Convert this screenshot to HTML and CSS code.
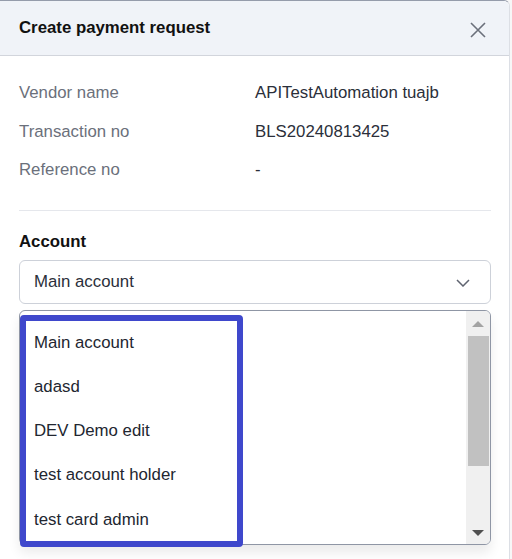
FILE: index.html
```html
<!DOCTYPE html>
<html lang="en">
<head>
  <meta charset="UTF-8">
  <meta name="viewport" content="width=device-width, initial-scale=1.0">
  <title>Create payment request</title>
  <link rel="stylesheet" href="styles.css">
</head>
<body>
  <div class="panel">
    <header class="panel-header">
      <h1>Create payment request</h1>
      <button class="close-btn" aria-label="Close">
        <svg width="16" height="16" viewBox="0 0 16 16">
          <path d="M1 1 L15 15 M15 1 L1 15" stroke="#6b707b" stroke-width="1.6" fill="none"/>
        </svg>
      </button>
    </header>

    <div class="panel-body">
      <dl class="details">
        <div class="detail-row">
          <dt>Vendor name</dt>
          <dd>APITestAutomation tuajb</dd>
        </div>
        <div class="detail-row">
          <dt>Transaction no</dt>
          <dd>BLS20240813425</dd>
        </div>
        <div class="detail-row">
          <dt>Reference no</dt>
          <dd>-</dd>
        </div>
      </dl>

      <hr class="divider">

      <label class="field-label">Account</label>
      <div class="select-box">
        <span>Main account</span>
        <svg width="14" height="8" viewBox="0 0 14 8">
          <path d="M1 1 L7 7 L13 1" stroke="#5f6470" stroke-width="1.5" fill="none"/>
        </svg>
      </div>

      <div class="dropdown">
        <ul class="options">
          <li>Main account</li>
          <li>adasd</li>
          <li>DEV Demo edit</li>
          <li>test account holder</li>
          <li>test card admin</li>
        </ul>
        <div class="scrollbar">
          <span class="arrow up"></span>
          <span class="thumb"></span>
          <span class="arrow down"></span>
        </div>
        <!-- highlight frame around the option list -->
        <div class="highlight"></div>
      </div>
    </div>
  </div>
</body>
</html>
```

FILE: styles.css
```css
* {
  margin: 0;
  padding: 0;
  box-sizing: border-box;
  font-family: 'Liberation Sans', Arial, sans-serif;
}

body {
  background-color: #f7f7f7;
  color: #2b2f3a;
  width: 512px;
  height: 559px;
  overflow: hidden;
}

.panel {
  width: 510px;
  height: 559px;
  background: white;
  border-top: 1px solid #959cab;
  border-right: 1px solid #dcdfe5;
  border-top-right-radius: 6px;
}

.panel-header {
  height: 55px;
  background-color: #f0f3f8;
  border-bottom: 1px solid #d2d5dc;
  border-top-right-radius: 6px;
  display: flex;
  align-items: center;
  justify-content: space-between;
  padding: 0 23px 0 19px;
}

.panel-header h1 {
  font-size: 16.8px;
  font-weight: bold;
  color: #111;
  margin-top: -1px;
}

.close-btn {
  background: none;
  border: none;
  display: flex;
  cursor: pointer;
  margin-top: 3px;
}

.panel-body {
  padding: 18px 18px 0 19px;
}

.detail-row {
  display: flex;
  align-items: center;
  height: 38.5px;
  font-size: 16.8px;
}

.detail-row dt {
  width: 236px;
  color: #6b707b;
}

.detail-row dd {
  color: #2b2f3a;
}

.divider {
  border: none;
  border-top: 1px solid #e5e7ec;
  margin: 20px 0 21px;
}

.field-label {
  display: block;
  font-size: 16.8px;
  font-weight: bold;
  color: #111;
  line-height: 20px;
  margin-bottom: 8px;
}

.select-box {
  height: 44px;
  border: 1px solid #cdd1d9;
  border-radius: 6px;
  display: flex;
  align-items: center;
  justify-content: space-between;
  padding: 0 20px 0 14px;
  font-size: 16.8px;
  color: #2b2f3a;
}

.select-box svg {
  margin-top: 2px;
}

.dropdown {
  position: relative;
  margin-top: 6px;
  height: 235px;
  border: 1px solid #8f96a5;
  border-radius: 6px;
  display: flex;
  box-shadow: 0 8px 12px rgba(0, 0, 0, 0.08);
}

.options {
  flex: 1;
  list-style: none;
  padding-top: 10px;
}

.options li {
  height: 44.25px;
  line-height: 44.25px;
  padding-left: 14px;
  font-size: 16.8px;
  color: #222630;
}

.scrollbar {
  width: 24px;
  background-color: #f0f0f0;
  border-top-right-radius: 5px;
  border-bottom-right-radius: 5px;
  display: flex;
  flex-direction: column;
  align-items: center;
  padding: 10px 0 8px;
}

.arrow {
  width: 0;
  height: 0;
  border-left: 6px solid transparent;
  border-right: 6px solid transparent;
}

.arrow.up {
  border-bottom: 6px solid #a3a3a3;
}

.arrow.down {
  border-top: 6px solid #505050;
  margin-top: auto;
}

.thumb {
  width: 21px;
  height: 130px;
  background-color: #c1c1c1;
  margin-top: 9px;
}

.highlight {
  position: absolute;
  left: 0;
  top: 4px;
  width: 223px;
  height: 232px;
  border: 6px solid #3f48cc;
  border-radius: 4px;
  pointer-events: none;
}
```
